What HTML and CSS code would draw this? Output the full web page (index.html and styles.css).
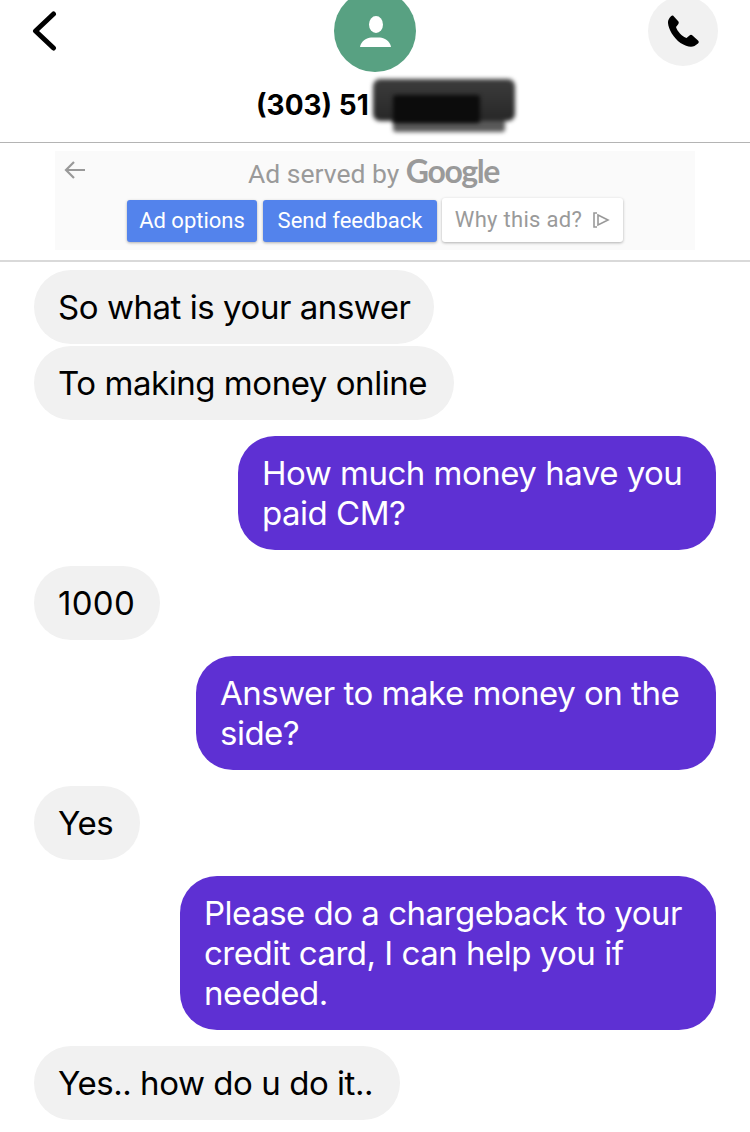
FILE: index.html
```html
<!DOCTYPE html>
<html lang="en">
<head>
  <meta charset="UTF-8">
  <meta name="viewport" content="width=device-width, initial-scale=1.0">
  <title>Messages</title>
  <link rel="stylesheet" href="styles.css">
</head>
<body>
  <header class="top-bar">
    <div class="top-row">
      <svg class="back-icon" width="26" height="40" viewBox="0 0 26 40">
        <path d="M21.500 3 L3.500 20 L21.500 37" fill="none" stroke="#000" stroke-width="5" stroke-linecap="round" stroke-linejoin="round"/>
      </svg>
      <div class="avatar">
        <svg width="36" height="36" viewBox="0 0 36 36">
          <ellipse cx="19" cy="11.500" rx="7" ry="8.500" fill="#fff"/>
          <path d="M3 34 C4 28 10 24.500 14 24.500 L23 24.500 C27 24.500 33 28 34 34 Z" fill="#fff"/>
        </svg>
      </div>
      <div class="call-button">
        <svg width="34" height="34" viewBox="0 0 34 34">
          <path d="M7 1.500 L12 7 C13 8 13 9 12 10.500 L10 13 C11 17 16 22.500 20.500 24 L23.500 21.500 C24.500 20.500 25.500 20.500 26.500 21.500 L32 26.500 C33 27.500 33 28.500 32 29.500 L28.500 32 C25 33.500 20 32.500 14.500 29 C7.500 24 2.500 15 2 9 C1.800 6.500 3 4.200 5 2.300 C5.500 1.700 6.300 1.300 7 1.500 Z" fill="#000"/>
        </svg>
      </div>
    </div>
    <div class="contact-name">
      <span>(303) 51</span>
      <div class="scribble scribble-under"></div>
      <div class="scribble scribble-back"></div>
      <div class="scribble scribble-front"></div>
    </div>
  </header>

  <section class="ad-strip">
    <div class="ad-box">
      <svg class="ad-back" width="24" height="20" viewBox="0 0 24 20">
        <path d="M22 10 L3 10 M11 2 L3 10 L11 18" fill="none" stroke="#999" stroke-width="2.200"/>
      </svg>
      <div class="ad-title">Ad served by <span class="google">Google</span></div>
      <div class="ad-buttons">
        <div class="ad-btn ad-options">Ad options</div>
        <div class="ad-btn send-feedback">Send feedback</div>
        <div class="ad-btn why-ad">
          Why this ad?
          <svg width="18" height="18" viewBox="0 0 18 18">
            <path d="M5 2 L2 2 L2 16 L5 16 M6 4 L16 9 L6 14 Z" fill="none" stroke="#999" stroke-width="1.600"/>
          </svg>
        </div>
      </div>
    </div>
  </section>

  <main class="thread">
    <div class="bubble in opener">So what is your answer</div>
    <div class="bubble in tight">To making money online</div>
    <div class="bubble out">How much money have you paid CM?</div>
    <div class="bubble in count">1000</div>
    <div class="bubble out out-2">Answer to make money on the side?</div>
    <div class="bubble in">Yes</div>
    <div class="bubble out out-3">Please do a chargeback to your credit card, I can help you if needed.</div>
    <div class="bubble in">Yes.. how do u do it..</div>
  </main>
</body>
</html>
```

FILE: styles.css
```css
body {
  margin: 0;
  width: 750px;
  height: 1132px;
  overflow: hidden;
  background: #fff;
  font-family: "Inter", "Liberation Sans", sans-serif;
}

/* header */
.top-bar {
  height: 142px;
  border-bottom: 1px solid #b4b4b4;
  overflow: hidden;
}

.top-row {
  display: grid;
  grid-template-columns: 1fr 82px 1fr;
  align-items: center;
  margin-top: -10px;
  height: 82px;
}

.back-icon {
  margin-left: 32px;
}

.avatar {
  width: 82px;
  height: 82px;
  border-radius: 50%;
  background: #58a182;
  display: flex;
  align-items: center;
  justify-content: center;
}

.call-button {
  justify-self: end;
  width: 70px;
  height: 70px;
  margin-right: 32px;
  border-radius: 50%;
  background: #f1f1f1;
  display: flex;
  align-items: center;
  justify-content: center;
}

.contact-name {
  position: relative;
  width: 260px;
  margin: 17px 0 0 256px;
  font-weight: bold;
  font-size: 28px;
  line-height: 32px;
  color: #000;
}

/* the blacked out part of the number */
.scribble {
  position: absolute;
  filter: blur(2px);
}

.scribble-under {
  left: 137px;
  top: 22px;
  width: 112px;
  height: 21px;
  background: #5a5a5a;
  border-radius: 3px;
}

.scribble-back {
  left: 117px;
  top: -10px;
  width: 142px;
  height: 42px;
  background: linear-gradient(#3c3c3c, #272727);
  border-radius: 7px;
}

.scribble-front {
  left: 137px;
  top: 6px;
  width: 87px;
  height: 28px;
  background: #0c0c0c;
  border-radius: 3px;
}

/* ad */
.ad-strip {
  height: 119px;
  border-bottom: 2px solid #d9d9d9;
  padding: 8px 55px 0;
  box-sizing: border-box;
}

.ad-box {
  position: relative;
  height: 99px;
  background: #fafafa;
  text-align: center;
}

.ad-back {
  position: absolute;
  left: 8px;
  top: 9px;
}

.ad-title {
  height: 47px;
  padding-right: 3px;
  line-height: 40px;
  font-family: "Roboto", sans-serif;
  font-size: 26.500px;
  color: #9a9a9a;
}

.google {
  font-family: "Lato", sans-serif;
  font-weight: bold;
  font-size: 32px;
  letter-spacing: -1.400px;
  color: #9a9a9a;
}

.ad-buttons {
  display: flex;
  align-items: flex-end;
  gap: 6px;
  padding-left: 72px;
}

.ad-btn {
  box-sizing: border-box;
  height: 42px;
  line-height: 41px;
  border-radius: 3px;
  background: #5383ec;
  color: #fff;
  font-family: "Roboto", sans-serif;
  font-size: 22px;
  text-align: center;
  box-shadow: 0 1px 3px rgba(0, 0, 0, 0.3);
}

.ad-options {
  width: 130px;
}

.send-feedback {
  width: 174px;
}

.why-ad {
  width: 181px;
  height: 44px;
  line-height: 44px;
  margin-left: -1px;
  background: #fff;
  color: #9a9a9a;
  letter-spacing: 0.300px;
  display: flex;
  align-items: center;
  justify-content: center;
  gap: 10px;
}

/* messages */
.thread {
  display: flex;
  flex-direction: column;
  padding: 8px 34px 0;
}

.bubble {
  box-sizing: border-box;
  padding: 17px 25px 17px 24px;
  border-radius: 37px;
  font-size: 33px;
  letter-spacing: -0.450px;
  line-height: 40px;
  margin-top: 16px;
}

.bubble:first-child {
  margin-top: 0;
}

.in {
  align-self: flex-start;
  padding-right: 27px;
  background: #f1f1f1;
  color: #000;
}

.opener {
  padding-right: 23px;
}

.tight {
  margin-top: 2px;
}

.count {
  letter-spacing: 0.300px;
  padding-right: 25px;
}

.out {
  align-self: flex-end;
  width: 478px;
  background: #5e30d3;
  color: #fff;
  letter-spacing: -0.500px;
}

.out-2 {
  width: 520px;
}

.out-3 {
  width: 536px;
}
```
